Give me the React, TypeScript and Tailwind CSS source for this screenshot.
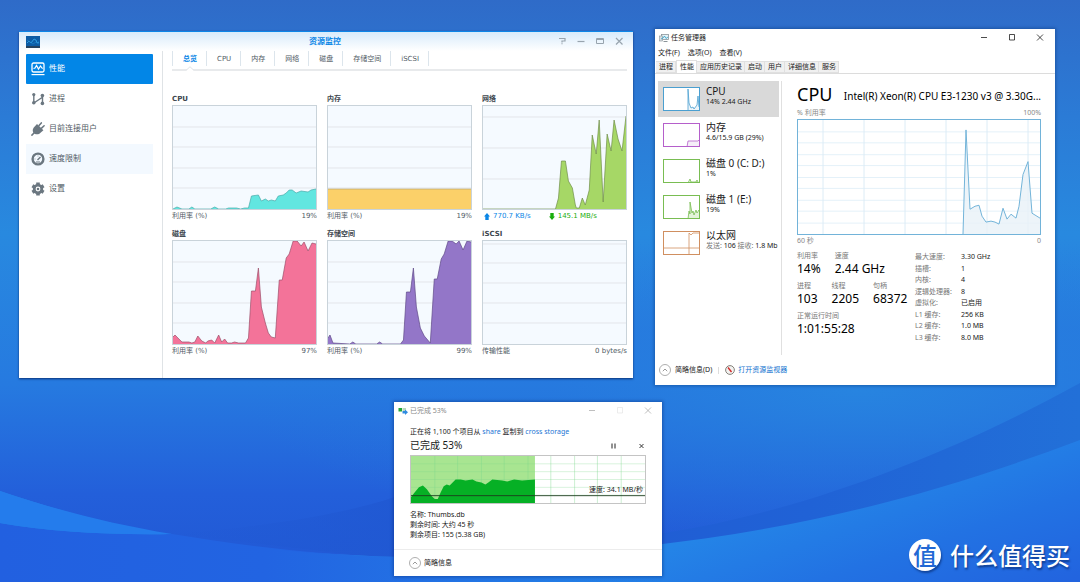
import React from 'react'

type Point = [number, number]

const cpuLoad: Point[] = [[0, 103], [4, 101], [9, 103], [16, 103], [19, 101], [22, 103], [38, 103], [42, 101], [46, 103], [53, 103], [56, 102], [64, 102], [68, 103], [72, 102], [76, 102], [79, 90], [86, 89], [89, 95], [93, 93], [96, 95], [99, 94], [103, 95], [106, 90], [111, 89], [114, 87], [117, 84], [120, 84], [124, 87], [129, 85], [136, 86], [139, 84], [144, 83]]
const memoryLoad: Point[] = [[0, 83], [144, 83]]
const networkLoad: Point[] = [[0, 103], [73, 103], [76, 92], [79, 55], [83, 55], [86, 75], [90, 82], [93, 99], [94, 102], [97, 102], [100, 92], [103, 99], [107, 84], [110, 29], [114, 48], [117, 14], [121, 96], [125, 28], [129, 45], [132, 14], [136, 33], [140, 45], [144, 10]]
const diskLoad: Point[] = [[0, 96], [2, 94], [5, 97], [9, 101], [16, 101], [19, 102], [22, 101], [25, 95], [29, 100], [33, 102], [35, 100], [39, 99], [42, 102], [46, 94], [49, 101], [52, 98], [55, 102], [59, 102], [62, 101], [66, 102], [73, 102], [76, 97], [79, 50], [83, 50], [86, 27], [89, 66], [93, 82], [96, 92], [99, 96], [103, 97], [107, 39], [110, 39], [114, 17], [117, 13], [121, 0], [125, 0], [129, 5], [132, 1], [136, 10], [140, 2], [144, 3]]
const volumeLoad: Point[] = [[0, 97], [2, 94], [5, 102], [22, 103], [25, 101], [28, 103], [49, 103], [52, 101], [55, 103], [73, 103], [76, 99], [79, 51], [83, 51], [86, 27], [89, 66], [93, 87], [97, 95], [103, 102], [107, 38], [110, 38], [114, 18], [117, 13], [121, 0], [125, 0], [129, 3], [132, 0], [136, 9], [140, 0], [144, 1]]
const xeonLoad: Point[] = [[165, 115], [168, 10], [172, 90], [177, 87], [181, 86], [184, 97], [188, 103], [193, 102], [197, 103], [201, 105], [205, 89], [209, 100], [213, 95], [218, 99], [221, 87], [225, 55], [230, 42], [234, 94], [242, 99]]
const copySpeed: Point[] = [[0, 42], [3, 38], [8, 32], [12, 30], [16, 34], [21, 41], [24, 44], [27, 44], [30, 37], [33, 31], [36, 29], [39, 30], [42, 27], [45, 24], [50, 24], [55, 25], [62, 24], [66, 26], [71, 27], [75, 29], [78, 27], [82, 24], [92, 25], [97, 26], [104, 24], [112, 25], [125, 24]]

const line = (points: Point[]) => points.map((p) => p.join(',')).join(' ')
const area = (points: Point[], bottom: number) =>
  `${points[0][0]},${bottom} ${line(points)} ${points[points.length - 1][0]},${bottom}`

function LoadChart({ points, grid, fill, stroke }: { points: Point[]; grid: number[]; fill: string; stroke: string }) {
  return (
    <div className="h-[105px] border border-[#c9d3da] bg-[#f5faff]">
      <svg viewBox="0 0 144 103" preserveAspectRatio="none" className="block h-full w-full">
        {grid.map((y) => (
          <line key={y} x1="0" x2="144" y1={y} y2={y} stroke="#e3e6ea" strokeWidth="1" />
        ))}
        {points.length > 0 && (
          <>
            <polygon points={area(points, 103)} fill={fill} />
            <polyline points={line(points)} fill="none" stroke={stroke} strokeWidth="0.7" />
          </>
        )}
      </svg>
    </div>
  )
}

const evenGrid = [21, 41, 62, 82]
const panels = [
  { title: 'CPU', label: '利用率 (%)', value: '19%', points: cpuLoad, grid: evenGrid, fill: '#62e6e0', stroke: '#4aa9a8' },
  { title: '内存', label: '利用率 (%)', value: '19%', points: memoryLoad, grid: evenGrid, fill: '#fbd069', stroke: '#b9a56e' },
  { title: '网络', label: '', value: '', points: networkLoad, grid: [11, 42, 73], fill: '#a6d766', stroke: '#6f8d49' },
  { title: '磁盘', label: '利用率 (%)', value: '97%', points: diskLoad, grid: evenGrid, fill: '#f37399', stroke: '#9c4f6b' },
  { title: '存储空间', label: '利用率 (%)', value: '99%', points: volumeLoad, grid: evenGrid, fill: '#9376c8', stroke: '#5f4a88' },
  { title: 'iSCSI', label: '传输性能', value: '0 bytes/s', points: [], grid: [3, 22, 42, 62, 82], fill: 'none', stroke: 'none' },
]

const navIcons = {
  performance: (
    <svg viewBox="0 0 14 14" className="h-[14px] w-[14px]" fill="none" stroke="white">
      <rect x="1" y="1" width="12" height="9" rx="1.5" strokeWidth="1.3" />
      <path d="M2.5 6.5 4 6 5.5 3.5 7.5 7 9.5 4 11 6l1 .3" strokeWidth="1.2" />
      <path d="M.5 12.6h13" strokeWidth="1.2" />
    </svg>
  ),
  process: (
    <svg viewBox="0 0 14 14" className="h-[14px] w-[14px]" fill="#6b7780" stroke="#6b7780">
      <path d="M2.8 3v8L11.5 5.2V11" fill="none" strokeWidth="1.4" />
      <circle cx="2.8" cy="2.6" r="1.6" stroke="none" />
      <circle cx="2.8" cy="10.8" r="1.8" stroke="none" />
      <circle cx="11.4" cy="3.6" r="1.8" stroke="none" />
      <circle cx="11.4" cy="11.4" r="1.8" stroke="none" />
    </svg>
  ),
  users: (
    <svg viewBox="0 0 14 14" className="h-[14px] w-[14px]" fill="#6b7780" stroke="#6b7780" strokeLinecap="round">
      <path d="M.9 13.1 3.5 10.5M8 3.6 10.3.9M10.6 6.1 13.1 3.7" fill="none" strokeWidth="1.5" />
      <path d="M2.6 5.8 6 1.9 12.4 8.3 8.4 11.7C6 12.8 3.9 12.2 2.6 11 1.4 9.6 1.5 7.4 2.6 5.8Z" stroke="none" />
    </svg>
  ),
  speed: (
    <svg viewBox="0 0 14 14" className="h-[14px] w-[14px]" fill="none" stroke="#6b7780">
      <circle cx="7" cy="7" r="5.4" strokeWidth="2.4" />
      <path d="M6.5 8 9.5 5" strokeWidth="1.5" />
      <path d="M3.5 7h1M7 3.5v1" strokeWidth="0.7" />
      <path d="M5 10h4" strokeWidth="1" />
    </svg>
  ),
  settings: (
    <svg viewBox="0 0 14 14" className="h-[14px] w-[14px]" fill="none" stroke="#6b7780">
      <path d="M7 .5v13M1.4 3.8l11.2 6.4M12.6 3.8 1.4 10.2" strokeWidth="3.6" />
      <circle cx="7" cy="7" r="3.8" fill="white" strokeWidth="2.8" />
      <circle cx="7" cy="7" r="1.3" fill="#6b7780" stroke="none" />
    </svg>
  ),
}

function ResourceMonitor() {
  return (
    <section className="flex h-[347px] flex-col border-t border-[#0d86e8] bg-white font-['DejaVu_Sans','Noto_Sans_CJK_SC',sans-serif] text-[7px] leading-[10px] text-[#505a64] shadow-[0_1px_2px_0_rgba(0,30,90,0.8)]">
      <header className="flex h-[19px] shrink-0 items-center bg-linear-to-b from-[#d8ebfb] to-white px-[7px]">
        <div className="flex-1">
          <svg viewBox="0 0 14 12" className="h-[12px] w-[14px]">
            <rect width="14" height="12" fill="#0c5ca5" />
            <rect y="10" width="14" height="2" fill="#24425f" />
            <path d="M1 7 3 5l2 2 3-4 2 1 1 3 2-1" fill="none" stroke="#31a4e8" strokeWidth="0.9" />
            <path d="M1 4 4 6 7 8l3-2 3 2" fill="none" stroke="#1d83c9" strokeWidth="0.7" />
          </svg>
        </div>
        <h1 className="text-[8px] font-bold text-[#0a86e6]">资源监控</h1>
        <div className="flex flex-1 justify-end gap-[9px] pr-[2px] text-[#98a4ae]">
          <button aria-label="帮助">
            <svg viewBox="0 0 10 10" className="h-[10px] w-[10px]" fill="none" stroke="currentColor" strokeWidth="1.2"><path d="M2 1.5h6V4H5v1.5M5 6.3v1" /></svg>
          </button>
          <button aria-label="最小化">
            <svg viewBox="0 0 10 10" className="h-[10px] w-[10px]" stroke="currentColor" strokeWidth="1.2"><path d="M1.5 4.5h7" /></svg>
          </button>
          <button aria-label="最大化">
            <svg viewBox="0 0 10 10" className="h-[10px] w-[10px]" fill="none" stroke="currentColor"><path d="M1.5 1.5h7v5h-7zM1.5 2.500h7" /></svg>
          </button>
          <button aria-label="关闭">
            <svg viewBox="0 0 10 10" className="h-[10px] w-[10px]" stroke="currentColor" strokeWidth="1.2"><path d="m2 1 6.500 6.500M8.500 1 2 7.500" /></svg>
          </button>
        </div>
      </header>

      <div className="flex min-h-0 flex-1">
        <nav className="w-[144px] shrink-0 border-r border-[#dfe3e6] px-[7px] pt-[3px] pr-[9px] text-[8px]">
          <button className="flex h-[30px] w-full items-center gap-[4px] rounded-[1px] bg-[#0286e7] pl-[5px] text-white">{navIcons.performance}性能</button>
          <button className="flex h-[30px] w-full items-center gap-[4px] pl-[5px]">{navIcons.process}进程</button>
          <button className="flex h-[30px] w-full items-center gap-[4px] pl-[5px]">{navIcons.users}目前连接用户</button>
          <button className="flex h-[30px] w-full items-center gap-[4px] bg-[#f3f9ff] pl-[5px]">{navIcons.speed}速度限制</button>
          <button className="flex h-[30px] w-full items-center gap-[4px] pl-[5px]">{navIcons.settings}设置</button>
        </nav>

        <div className="min-w-0 flex-1 pr-[6px] pl-[9px]">
          <div className="relative flex h-[20px] items-start border-b-2 border-[#e8eaec]">
            {['总览', 'CPU', '内存', '网络', '磁盘', '存储空间', 'iSCSI'].map((tab, i) => (
              <button
                key={tab}
                className={
                  i === 0
                    ? 'h-[15px] border-x border-[#dce5ec] pr-[9px] pl-[10px] font-bold text-[#0a86e6]'
                    : 'h-[15px] border-r border-[#dce5ec] pr-[9px] pl-[10px]'
                }
              >
                {tab}
              </button>
            ))}
            <svg viewBox="0 0 8 5" className="absolute top-[15px] left-[14px] h-[5px] w-[8px]">
              <path d="M0 4.5 4 .7 8 4.5V5H0z" fill="white" />
              <path d="M0 4.5 4 .7 8 4.5" fill="none" stroke="#dfe3e6" />
            </svg>
          </div>

          <div className="grid grid-cols-3 gap-x-[10px] gap-y-[8px] pt-[23px]">
            {panels.map((p) => (
              <figure key={p.title}>
                <h2 className="mb-[1px] font-bold text-[#3d464e]">{p.title}</h2>
                <LoadChart points={p.points} grid={p.grid} fill={p.fill} stroke={p.stroke} />
                {p.label ? (
                  <figcaption className="mt-[1px] flex justify-between">
                    <span>{p.label}</span>
                    <span>{p.value}</span>
                  </figcaption>
                ) : (
                  <figcaption className="mt-[1px] flex gap-[18px] pl-[2px]">
                    <span className="flex items-center gap-[3px] text-[#0a86e6]">
                      <svg viewBox="0 0 6 7" className="h-[7px] w-[6px]" fill="currentColor"><path d="M3 0 6 3.5H4.7V7H1.3V3.5H0z" /></svg>
                      770.7 KB/s
                    </span>
                    <span className="flex items-center gap-[3px] text-[#19ad0d]">
                      <svg viewBox="0 0 6 7" className="h-[7px] w-[6px]" fill="currentColor"><path d="M3 7 6 3.5H4.7V0H1.3V3.5H0z" /></svg>
                      145.1 MB/s
                    </span>
                  </figcaption>
                )}
              </figure>
            ))}
          </div>
        </div>
      </div>
    </section>
  )
}

function WindowButtons({ dim }: { dim?: boolean }) {
  return (
    <div className={dim ? 'flex gap-[18px] text-[#a3a3a3]' : 'flex gap-[18px] text-black'}>
      <button aria-label="最小化">
        <svg viewBox="0 0 10 10" className="h-[10px] w-[10px]" stroke="currentColor" strokeWidth="0.7"><path d="M2 4.5h6" /></svg>
      </button>
      <button aria-label="最大化" className={dim ? 'text-[#e4e4e4]' : ''}>
        <svg viewBox="0 0 10 10" className="h-[10px] w-[10px]" fill="none" stroke="currentColor" strokeWidth="0.7"><path d="M2.5 1.5h5v5.500h-5z" /></svg>
      </button>
      <button aria-label="关闭">
        <svg viewBox="0 0 10 10" className="h-[10px] w-[10px]" stroke="currentColor" strokeWidth="0.7"><path d="m2 1.5 6 6M8 1.5l-6 6" /></svg>
      </button>
    </div>
  )
}

function Collapse() {
  return (
    <svg viewBox="0 0 12 12" className="h-[12px] w-[12px]" fill="none" stroke="#9a9a9a">
      <circle cx="6" cy="6" r="5.5" strokeWidth="0.8" />
      <path d="M3.8 7.2 6 5l2.2 2.2" />
    </svg>
  )
}

const devices = [
  { name: 'CPU', detail: '14% 2.44 GHz', color: '#4a9fd0', path: 'M25 24V2l1 14 2 5 2-1 1 2 3-4 1-9 1 11', fill: '#eef5fa' },
  { name: '内存', detail: '4.6/15.9 GB (29%)', color: '#b55fcb', path: 'M24 24l1-6h10l1-1', fill: '#f5eef8' },
  { name: '磁盘 0 (C: D:)', detail: '1%', color: '#79bd52', path: 'M25 24l2-4 1 3h5l1-2 1 2', fill: '#eff7ea' },
  { name: '磁盘 1 (E:)', detail: '19%', color: '#79bd52', path: 'M25 24l1-8 1 3V7l2 11 1-2 1 4 2-5 1 3 2-3 1 3', fill: '#e4f3da' },
  { name: '以太网', detail: '', color: '#d08f60', path: 'M0 17h36M26 24V2l2 2 2-2h6', fill: 'none' },
]

const specs = [
  ['最大速度:', '3.30 GHz'],
  ['插槽:', '1'],
  ['内核:', '4'],
  ['逻辑处理器:', '8'],
  ['虚拟化:', '已启用'],
  ['L1 缓存:', '256 KB'],
  ['L2 缓存:', '1.0 MB'],
  ['L3 缓存:', '8.0 MB'],
]

function Stat({ label, value }: { label: string; value: string }) {
  return (
    <div>
      <dt className="leading-[10px] text-[#777]">{label}</dt>
      <dd className="text-[12px] leading-[16px] text-black">{value}</dd>
    </div>
  )
}

function TaskManager() {
  return (
    <section className="flex h-[356px] flex-col bg-white font-['Noto_Sans','Noto_Sans_CJK_SC',sans-serif] text-[7px] leading-[10px] text-[#1a1a1a] shadow-[0_0_3px_1px_rgba(0,40,100,0.4)]">
      <header className="flex h-[18px] items-center gap-[2px] pr-[10px] pl-[4px]">
        <svg viewBox="0 0 10 10" className="h-[10px] w-[10px]" fill="none">
          <rect x="2.5" y="1.5" width="7" height="5" fill="#e5f3f8" stroke="#8b9499" strokeWidth="0.8" />
          <rect x="0.5" y="3" width="3" height="5" fill="#d7dde0" stroke="#8b9499" strokeWidth="0.6" />
          <path d="M2 6 4 5l1.5-2L7 5.5l2-1.5" stroke="#2d9cc4" strokeWidth="0.8" />
          <path d="M4.5 8.5h4" stroke="#8b9499" />
        </svg>
        <h1 className="flex-1">任务管理器</h1>
        <WindowButtons />
      </header>
      <div className="flex h-[12px] items-center gap-[8px] pl-[3px]">
        <button>文件(F)</button>
        <button>选项(O)</button>
        <button>查看(V)</button>
      </div>
      <div className="flex h-[15px] items-end border-b border-[#dcdcdc] pl-[1px]">
        {['进程', '性能', '应用历史记录', '启动', '用户', '详细信息', '服务'].map((tab, i) => (
          <button
            key={tab}
            className={
              i === 1
                ? 'h-[13px] border border-b-0 border-[#e0e0e0] bg-white pr-[2px] pl-[3px] leading-[12px]'
                : 'h-[12px] border border-l-0 border-[#e0e0e0] bg-[#f0f0f0] pr-[2px] pl-[3px]'
            }
          >
            {tab}
          </button>
        ))}
      </div>

      <div className="flex flex-1 pt-[7px]">
        <ul className="w-[127px] shrink-0 border-r border-[#e0e0e0] pl-[3px]">
          {devices.map((d, i) => (
            <li
              key={d.name}
              className={
                i === 0
                  ? 'mr-[2px] flex h-[36px] items-center gap-[6px] bg-[#d9d9d9] pl-[5px]'
                  : 'flex h-[36px] items-center gap-[6px] pl-[5px]'
              }
            >
              <svg viewBox="0 0 37 24" className="h-[24px] w-[37px] shrink-0">
                <rect x="0.5" y="0.5" width="36" height="23" fill="white" />
                <path d={d.path + 'V24'} fill={d.fill} />
                <path d={d.path} fill="none" stroke={d.color} strokeWidth="0.8" />
                <rect x="0.5" y="0.5" width="36" height="23" fill="none" stroke={d.color} />
              </svg>
              <div className="pb-[6px] whitespace-nowrap">
                <p className="text-[10px] leading-[12px]">{d.name}</p>
                {d.detail ? (
                  <p>{d.detail}</p>
                ) : (
                  <p>
                    <span className="text-[#777]">发送:</span> 106 <span className="text-[#777]">接收:</span> 1.8 Mb
                  </p>
                )}
              </div>
            </li>
          ))}
        </ul>

        <div className="min-w-0 flex-1 pr-[14px] pl-[15px]">
          <div className="flex h-[26px] items-center justify-between gap-[8px] whitespace-nowrap text-black">
            <h2 className="text-[18px] leading-[26px]">CPU</h2>
            <span className="pt-[4px] text-[10px] leading-[14px]">Intel(R) Xeon(R) CPU E3-1230 v3 @ 3.30G...</span>
          </div>
          <div className="flex justify-between leading-[12px] text-[#888]">
            <span>% 利用率</span>
            <span>100%</span>
          </div>
          <div className="h-[116px] border border-[#72b3d9]">
            <svg viewBox="0 0 242 115" preserveAspectRatio="none" className="block h-full w-full">
              {[12, 23, 35, 46, 58, 69, 81, 92, 104].map((y) => (
                <line key={y} x1="0" x2="242" y1={y} y2={y} stroke="#e4f1f9" />
              ))}
              {[25, 66, 107, 148, 189, 230].map((x) => (
                <line key={x} x1={x} x2={x} y1="0" y2="115" stroke="#dcecf6" />
              ))}
              <polygon points={area(xeonLoad, 115)} fill="#e9f1f8" fillOpacity="0.8" />
              <polyline points={line(xeonLoad)} fill="none" stroke="#72b3d9" />
            </svg>
          </div>
          <div className="flex justify-between leading-[12px] text-[#888]">
            <span>60 秒</span>
            <span>0</span>
          </div>
          <div className="flex pt-[4px]">
            <dl className="flex w-[118px] shrink-0 flex-col gap-[4px]">
              <div className="flex gap-[14px]">
                <Stat label="利用率" value="14%" />
                <Stat label="速度" value="2.44 GHz" />
              </div>
              <div className="flex gap-[14px]">
                <Stat label="进程" value="103" />
                <Stat label="线程" value="2205" />
                <Stat label="句柄" value="68372" />
              </div>
              <Stat label="正常运行时间" value="1:01:55:28" />
            </dl>
            <dl className="flex h-[92px] flex-col justify-between leading-[11px]">
              {specs.map(([label, value]) => (
                <div key={label} className="flex">
                  <dt className="w-[46px] text-[#777]">{label}</dt>
                  <dd>{value}</dd>
                </div>
              ))}
            </dl>
          </div>
        </div>
      </div>

      <footer className="flex h-[30px] items-center pl-[4px]">
        <button className="flex items-center gap-[4px]">
          <Collapse />
          简略信息(D)
        </button>
        <span className="mx-[6px] h-[7px] border-l border-[#ddd]" />
        <a href="#" className="flex items-center gap-[3px] text-[#1273d0]">
          <svg viewBox="0 0 10 10" className="h-[10px] w-[10px]">
            <circle cx="5" cy="5" r="4.4" fill="#f2f2f0" stroke="#77746c" strokeWidth="0.9" />
            <path d="M3 2.5 6.5 7" stroke="#d22a2a" strokeWidth="1.4" />
          </svg>
          打开资源监视器
        </a>
      </footer>
    </section>
  )
}

function CopyDialog() {
  return (
    <section className="flex h-[174px] w-1/4 min-w-[268px] flex-col bg-white font-['Noto_Sans','Noto_Sans_CJK_SC',sans-serif] text-[7px] leading-[10px] text-[#1a1a1a] shadow-[0_0_3px_1px_rgba(0,30,100,0.4)]">
      <header className="flex h-[18px] items-center gap-[2px] pr-[9px] pl-[4px] text-[#8a8a8a]">
        <svg viewBox="0 0 10 8" className="h-[8px] w-[10px]">
          <rect x="0.5" y="1" width="3.5" height="3.5" fill="#23a638" />
          <rect x="4.5" y="1" width="3.5" height="3" fill="#bcd9bf" />
          <path d="M4.5 4H7V2.5l3 2.7L7 8V6.5H4.5z" fill="#2f8be0" />
        </svg>
        <h1 className="flex-1">已完成 53%</h1>
        <WindowButtons dim />
      </header>
      <div className="flex-1 px-[16px] pt-[7px]">
        <p>
          正在将 1,100 个项目从 <a href="#" className="text-[#1a74d4]">share</a> 复制到 <a href="#" className="text-[#1a74d4]">cross storage</a>
        </p>
        <div className="flex h-[18px] items-center">
          <h2 className="flex-1 pb-[3px] text-[10px] leading-[14px]">已完成 53%</h2>
          <button aria-label="暂停" className="mr-[20px]">
            <svg viewBox="0 0 8 8" className="h-[8px] w-[8px]" stroke="#222" strokeWidth="1"><path d="M2 1.5v5M5 1.5v5" /></svg>
          </button>
          <button aria-label="取消">
            <svg viewBox="0 0 8 8" className="h-[8px] w-[8px]" stroke="#222" strokeWidth="0.9"><path d="m1.5 2 4 4M5.5 2l-4 4" /></svg>
          </button>
        </div>
        <div className="relative h-[49px] border border-[#c4c4c4]">
          <svg viewBox="0 0 236 48" preserveAspectRatio="none" className="block h-full w-full">
            <rect width="125" height="48" fill="#a8e591" />
            {[8, 16, 24, 32, 40].map((y) => (
              <line key={y} x1="0" x2="236" y1={y} y2={y} stroke="#7ed68b" strokeOpacity="0.3" />
            ))}
            {[24, 47, 71, 94, 118, 141, 165, 188, 212].map((x) => (
              <line key={x} x1={x} x2={x} y1="0" y2="48" stroke="#7ed68b" strokeOpacity="0.4" />
            ))}
            <polygon points={area(copySpeed, 48)} fill="#06b025" />
            <line x1="0" x2="236" y1="40.5" y2="40.5" stroke="#1c3a1c" strokeWidth="0.9" />
          </svg>
          <span className="absolute right-[2px] bottom-[8px]">速度: 34.1 MB/秒</span>
        </div>
        <div className="mt-[6px]">
          <p>名称: Thumbs.db</p>
          <p>剩余时间: 大约 45 秒</p>
          <p>剩余项目: 155 (5.38 GB)</p>
        </div>
      </div>
      <footer className="flex h-[27px] items-center border-t border-[#ececec] pl-[15px]">
        <button className="flex items-center gap-[3px]">
          <Collapse />
          简略信息
        </button>
      </footer>
    </section>
  )
}

function Wallpaper() {
  return (
    <svg viewBox="0 0 1080 582" preserveAspectRatio="none" className="absolute inset-0 h-full w-full">
      <defs>
        <linearGradient id="sky" x1="0" y1="0" x2="0" y2="1">
          <stop offset="0" stopColor="#2f6bc8" />
          <stop offset="0.2" stopColor="#2b7bd6" />
          <stop offset="0.4" stopColor="#2889df" />
          <stop offset="0.66" stopColor="#267ae0" />
          <stop offset="0.85" stopColor="#235fda" />
          <stop offset="1" stopColor="#2157d4" />
        </linearGradient>
        <radialGradient id="glow" gradientUnits="userSpaceOnUse" cx="0" cy="0" r="1" gradientTransform="translate(860 390) scale(620 160)">
          <stop offset="0" stopColor="#2784e0" />
          <stop offset="0.5" stopColor="#2679de" stopOpacity="0.6" />
          <stop offset="1" stopColor="#2679de" stopOpacity="0" />
        </radialGradient>
        <linearGradient id="ridge" gradientUnits="userSpaceOnUse" x1="1080" y1="0" x2="172" y2="0">
          <stop offset="0" stopColor="#2270d8" />
          <stop offset="0.3" stopColor="#2062d6" />
          <stop offset="0.7" stopColor="#2058d2" />
          <stop offset="1" stopColor="#2058d2" stopOpacity="0" />
        </linearGradient>
        <linearGradient id="wave" gradientUnits="userSpaceOnUse" x1="960" y1="450" x2="1010" y2="600">
          <stop offset="0" stopColor="#2484e7" />
          <stop offset="0.5" stopColor="#2272e3" />
          <stop offset="1" stopColor="#2264df" />
        </linearGradient>
        <linearGradient id="waveLeft" x1="0" y1="0" x2="1" y2="0">
          <stop offset="0" stopColor="#2260e0" />
          <stop offset="0.4" stopColor="#2264e2" />
          <stop offset="1" stopColor="#2264e2" stopOpacity="0" />
        </linearGradient>
      </defs>
      <rect width="1080" height="582" fill="url(#sky)" />
      <rect width="1080" height="582" fill="url(#glow)" />
      <path d="M172 534C280 526 360 510 400 495L665 533C800 512 950 455 1080 383V460L700 560H400Z" fill="url(#ridge)" />
      <path d="M0 491C90 522 210 552 400 557C700 560 900 508 1080 440V582H0Z" fill="url(#wave)" />
      <path d="M0 523C50 532 110 535 172 534C245 546 320 555 400 557C500 558 590 553 660 547V582H0Z" fill="url(#waveLeft)" />
      <path d="M0 491C50 508 110 524 172 534C110 535 50 532 0 523Z" fill="#247cec" />
    </svg>
  )
}

export default function App() {
  return (
    <main className="relative min-h-screen overflow-hidden bg-[#2576e0]">
      <Wallpaper />
      <div className="relative grid grid-cols-[614fr_400fr] items-start gap-[22px] pt-[29px] pr-[25px] pl-[19px]">
        <div className="pt-[2px]">
          <ResourceMonitor />
        </div>
        <TaskManager />
      </div>
      <div className="relative flex justify-center pt-[17px] pr-6">
        <CopyDialog />
      </div>
      <div className="absolute right-[10px] bottom-[10px] flex items-center gap-[9px] font-['Noto_Sans_CJK_SC',sans-serif] text-white [text-shadow:1px_2px_2px_rgba(0,30,90,0.6)]">
        <span className="flex h-[32px] w-[32px] items-center justify-center rounded-full bg-white text-[24px] leading-[32px] font-medium text-[#2268d4] shadow-[1px_2px_2px_rgba(0,30,90,0.5)] [text-shadow:none]">
          值
        </span>
        <span className="text-[24px] leading-[34px] font-medium">什么值得买</span>
      </div>
    </main>
  )
}
